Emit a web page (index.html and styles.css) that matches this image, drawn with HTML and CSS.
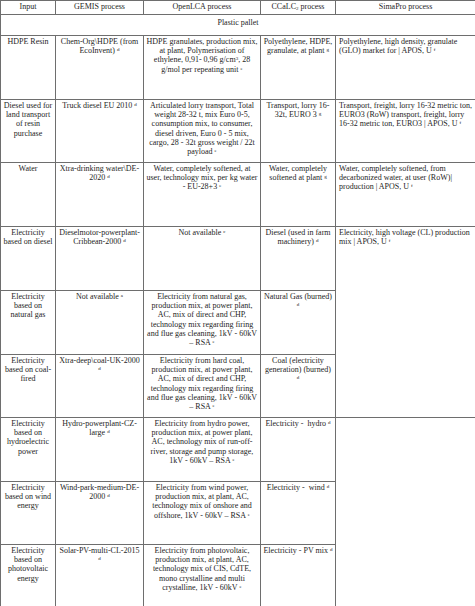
FILE: index.html
```
<!DOCTYPE html>
<html>
<head>
<meta charset="utf-8">
<link rel="stylesheet" href="styles.css">
</head>
<body>
<table class="lca">
  <colgroup>
    <col class="c1"><col class="c2"><col class="c3"><col class="c4"><col class="c5">
  </colgroup>
  <tr class="head">
    <td>Input</td><td>GEMIS process</td><td>OpenLCA process</td><td>CCaLC<sub>2</sub> process</td><td>SimaPro process</td>
  </tr>
  <tr class="group">
    <td colspan="5">Plastic pallet</td>
  </tr>
  <tr class="r64">
    <td>HDPE Resin</td>
    <td>Chem-Org\HDPE (from EcoInvent) <sup>d</sup></td>
    <td>HDPE granulates, production mix, at plant, Polymerisation of ethylene, 0,91- 0,96 g/cm<sup>3</sup>, 28 g/mol per repeating unit <sup>e</sup></td>
    <td>Polyethylene, HDPE, granulate, at plant <sup>g</sup></td>
    <td class="left">Polyethylene, high density, granulate (GLO) market for | APOS, U <sup>f</sup></td>
  </tr>
  <tr class="r63">
    <td>Diesel used for land transport of resin purchase</td>
    <td>Truck diesel EU 2010 <sup>d</sup></td>
    <td>Articulated lorry transport, Total weight 28-32 t, mix Euro 0-5, consumption mix, to consumer, diesel driven, Euro 0 - 5 mix, cargo, 28 - 32t gross weight / 22t payload <sup>e</sup></td>
    <td>Transport, lorry 16-32t, EURO 3 <sup>g</sup></td>
    <td class="left">Transport, freight, lorry 16-32 metric ton, EURO3 (RoW) transport, freight, lorry 16-32 metric ton, EURO3 | APOS, U <sup>f</sup></td>
  </tr>
  <tr class="r64">
    <td>Water</td>
    <td>Xtra-drinking water\DE-2020 <sup>d</sup></td>
    <td>Water, completely softened, at user, technology mix, per kg water - EU-28+3 <sup>e</sup></td>
    <td>Water, completely softened at plant <sup>g</sup></td>
    <td class="left">Water, completely softened, from decarbonized water, at user (RoW)| production | APOS, U <sup>f</sup></td>
  </tr>
  <tr class="r64">
    <td>Electricity based on diesel</td>
    <td>Dieselmotor-powerplant-Cribbean-2000 <sup>d</sup></td>
    <td>Not available <sup>c</sup></td>
    <td>Diesel (used in farm machinery) <sup>d</sup></td>
    <td class="left" rowspan="3">Electricity, high voltage (CL) production mix | APOS, U <sup>f</sup></td>
  </tr>
  <tr class="r64">
    <td>Electricity based on natural gas</td>
    <td>Not available <sup>a</sup></td>
    <td>Electricity from natural gas, production mix, at power plant, AC, mix of direct and CHP, technology mix regarding firing and flue gas cleaning, 1kV - 60kV – RSA <sup>e</sup></td>
    <td>Natural Gas (burned) <sup>d</sup></td>
  </tr>
  <tr class="r63">
    <td>Electricity based on coal-fired</td>
    <td>Xtra-deep\coal-UK-2000 <sup>d</sup></td>
    <td>Electricity from hard coal, production mix, at power plant, AC, mix of direct and CHP, technology mix regarding firing and flue gas cleaning, 1kV - 60kV – RSA <sup>e</sup></td>
    <td>Coal (electricity generation) (burned) <sup>d</sup></td>
  </tr>
  <tr class="r64">
    <td>Electricity based on hydroelectric power</td>
    <td>Hydro-powerplant-CZ-large <sup>d</sup></td>
    <td>Electricity from hydro power, production mix, at power plant, AC, technology mix of run-off-river, storage and pump storage, 1kV - 60kV – RSA <sup>e</sup></td>
    <td>Electricity - &nbsp;hydro <sup>d</sup></td>
    <td class="left" rowspan="3"></td>
  </tr>
  <tr class="r63">
    <td>Electricity based on wind energy</td>
    <td>Wind-park-medium-DE-2000 <sup>d</sup></td>
    <td>Electricity from wind power, production mix, at plant, AC, technology mix of onshore and offshore, 1kV - 60kV – RSA <sup>e</sup></td>
    <td>Electricity - &nbsp;wind <sup>d</sup></td>
  </tr>
  <tr class="r64">
    <td>Electricity based on photovoltaic energy</td>
    <td>Solar-PV-multi-CL-2015 <sup>d</sup></td>
    <td>Electricity from photovoltaic, production mix, at plant, AC, technology mix of CIS, CdTE, mono crystalline and multi crystalline, 1kV - 60kV <sup>e</sup></td>
    <td>Electricity - PV mix <sup>d</sup></td>
  </tr>
</table>
</body>
</html>
```
FILE: styles.css
```
html, body {
  margin: 0;
  padding: 0;
  background: #ffffff;
}
.lca {
  width: 475px;
  table-layout: fixed;
  border-collapse: collapse;
  font-family: "Liberation Serif", "Times New Roman", serif;
  font-size: 8px;
  line-height: 9.2px;
  color: #1e1e1e;
}
.c1 { width: 55px; }
.c2 { width: 88px; }
.c3 { width: 117px; }
.c4 { width: 75px; }
.c5 { width: 140px; }
.lca td {
  border: 1px solid #6e6e6e;
  padding: 1px 2px 0 2px;
  text-align: center;
  vertical-align: top;
  overflow: hidden;
}
.lca td.left {
  text-align: left;
  padding-left: 3px;
}
.head td {
  height: 12px;
  padding-top: 1px;
}
.group td {
  height: 17px;
  padding-top: 3px;
}
.r64 td { height: 62px; }
.r63 td { height: 61px; }
.lca tr:last-child td {
  border-bottom: 2px solid #666666;
}
sup {
  font-size: 5px;
  line-height: 0;
  vertical-align: 2.5px;
}
sub {
  font-size: 5px;
  line-height: 0;
  vertical-align: -1px;
}
```
